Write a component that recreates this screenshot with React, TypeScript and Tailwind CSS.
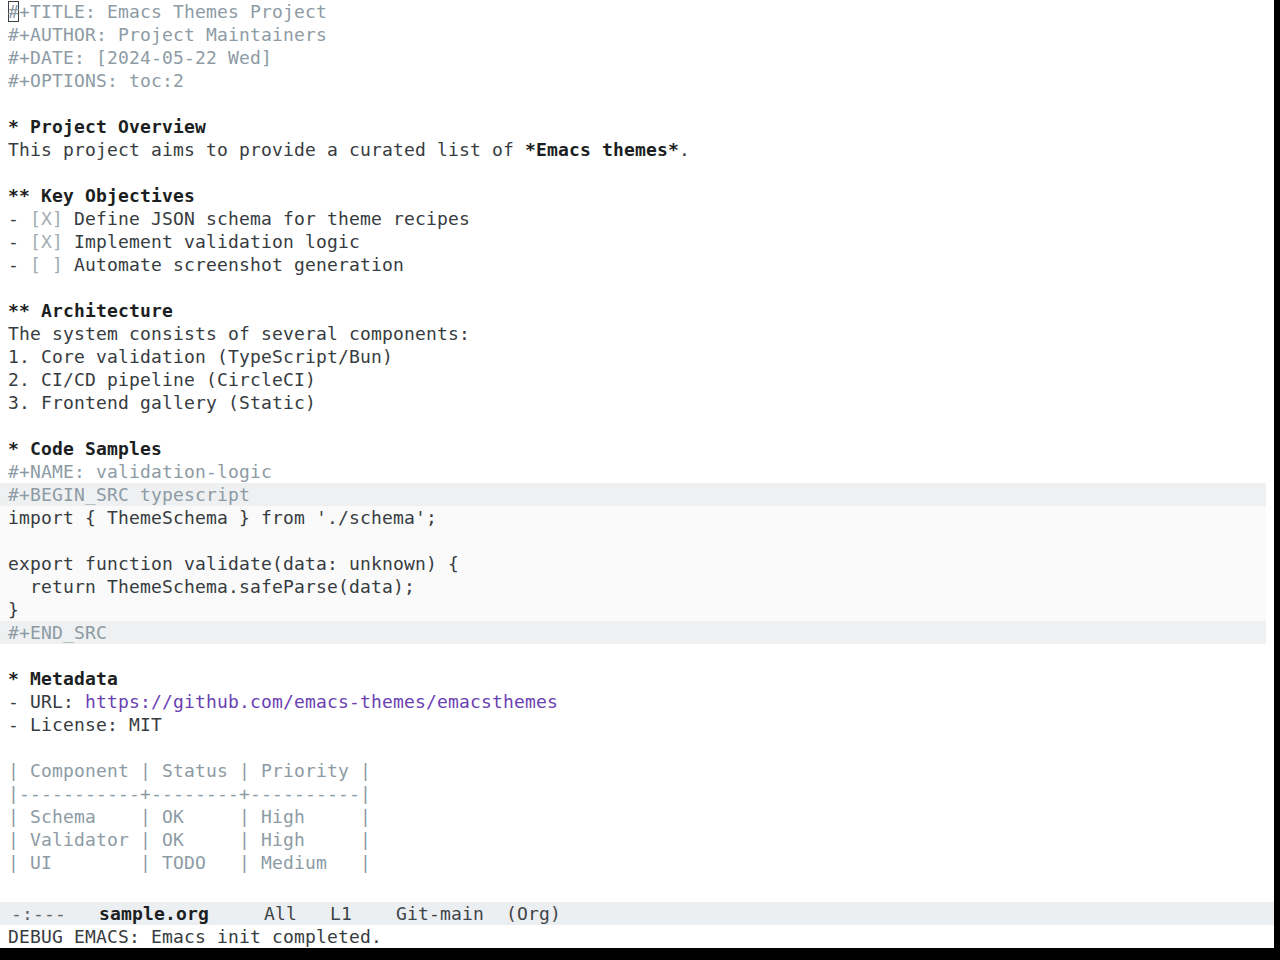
const META = 'text-[#8d9ba5]';
const BODY = 'text-[#373c41]';
const HEAD = 'font-bold text-[#1c1f22]';

function Line({ children, className = '' }: { children?: React.ReactNode; className?: string }) {
  return <div className={`h-[23px] whitespace-pre px-2 ${className}`}>{children ?? ' '}</div>;
}

function Check({ done, text }: { done: boolean; text: string }) {
  return (
    <Line className={BODY}>
      {'- '}
      <span className="text-[#a3adb4]">{done ? '[X]' : '[ ]'}</span>
      {' ' + text}
    </Line>
  );
}

export default function App() {
  return (
    <div className="flex h-[960px] w-[1280px] bg-black">
      <div
        className="flex h-[948px] w-[1274px] flex-col bg-white text-[18px] leading-[23px] tracking-[0.164px]"
        style={{ fontFamily: '"DejaVu Sans Mono", "Liberation Mono", monospace' }}
      >
        {/* buffer */}
        <div className="h-[902px] overflow-hidden">
          <Line className={META}>
            <span className="shadow-[inset_0_0_0_1px_#3c3f42]">#</span>+TITLE: Emacs Themes Project
          </Line>
          <Line className={META}>#+AUTHOR: Project Maintainers</Line>
          <Line className={META}>#+DATE: [2024-05-22 Wed]</Line>
          <Line className={META}>#+OPTIONS: toc:2</Line>
          <Line />
          <Line className={HEAD}>* Project Overview</Line>
          <Line className={BODY}>
            This project aims to provide a curated list of <span className={HEAD}>*Emacs themes*</span>.
          </Line>
          <Line />
          <Line className={HEAD}>** Key Objectives</Line>
          <Check done text="Define JSON schema for theme recipes" />
          <Check done text="Implement validation logic" />
          <Check done={false} text="Automate screenshot generation" />
          <Line />
          <Line className={HEAD}>** Architecture</Line>
          <Line className={BODY}>The system consists of several components:</Line>
          <Line className={BODY}>1. Core validation (TypeScript/Bun)</Line>
          <Line className={BODY}>2. CI/CD pipeline (CircleCI)</Line>
          <Line className={BODY}>3. Frontend gallery (Static)</Line>
          <Line />
          <Line className={HEAD}>* Code Samples</Line>
          <Line className={META}>#+NAME: validation-logic</Line>
          <div className="mr-2">
            <Line className={`${META} bg-[#eef0f1]`}>#+BEGIN_SRC typescript</Line>
            <div className={`bg-[#fafafa] ${BODY}`}>
              <Line>import {'{'} ThemeSchema {'}'} from './schema';</Line>
              <Line />
              <Line>export function validate(data: unknown) {'{'}</Line>
              <Line>  return ThemeSchema.safeParse(data);</Line>
              <Line>{'}'}</Line>
            </div>
            <Line className={`${META} bg-[#eef0f1]`}>#+END_SRC</Line>
          </div>
          <Line />
          <Line className={HEAD}>* Metadata</Line>
          <Line className={BODY}>
            - URL: <span className="text-[#6b3fb3]">https://github.com/emacs-themes/emacsthemes</span>
          </Line>
          <Line className={BODY}>- License: MIT</Line>
          <Line />
          <div className={META}>
            <Line>| Component | Status | Priority |</Line>
            <Line>|-----------+--------+----------|</Line>
            <Line>| Schema    | OK     | High     |</Line>
            <Line>| Validator | OK     | High     |</Line>
            <Line>| UI        | TODO   | Medium   |</Line>
          </div>
        </div>

        {/* mode line */}
        <Line className="bg-[#eceff1] !pl-[11px] text-[#3f4448]">
          <span className="text-[#5f686e]">-:---</span>
          {'   '}
          <span className="font-bold text-[#1c1f22]">sample.org</span>
          {'     All   L1    Git-main  (Org)'}
        </Line>

        {/* echo area */}
        <Line className="text-[#373c41]">DEBUG EMACS: Emacs init completed.</Line>
      </div>
    </div>
  );
}
